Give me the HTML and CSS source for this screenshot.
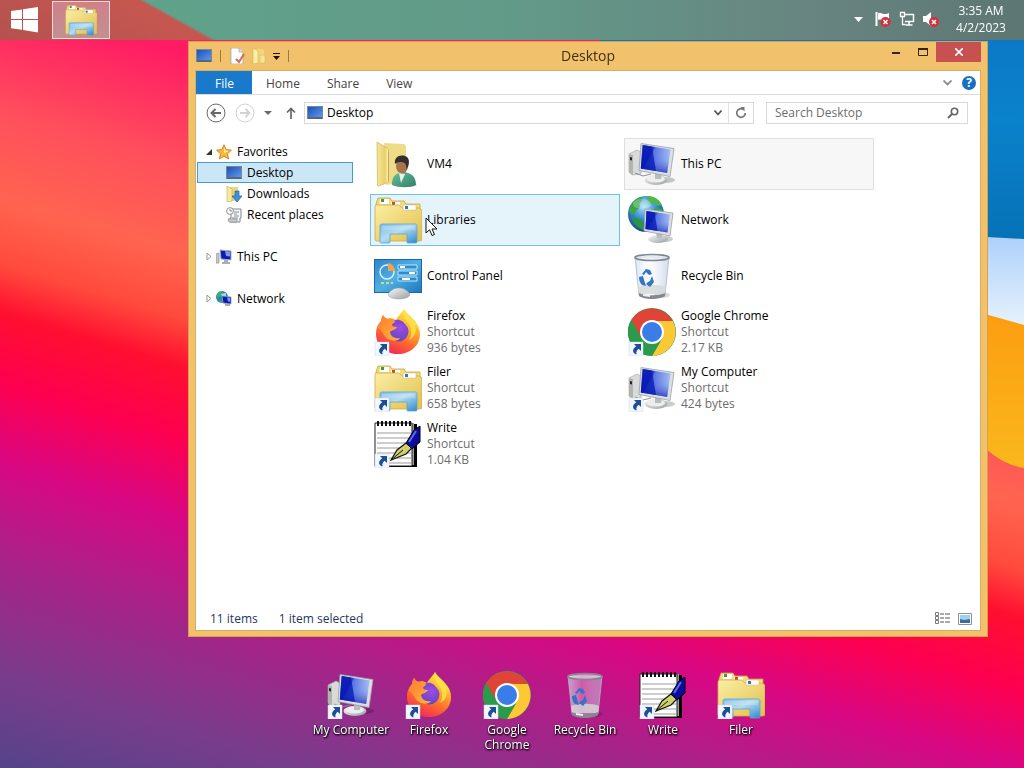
FILE: index.html
```html
<!DOCTYPE html>
<html lang="en">
<head>
  <meta charset="UTF-8">
  <meta name="viewport" content="width=device-width, initial-scale=1">
  <title>Desktop</title>
  <link rel="stylesheet" href="styles.css">
</head>
<body>

  <!-- icon set -->
  <svg class="sprite" aria-hidden="true">
    <defs>
      <linearGradient id="gFolder" x1="0" y1="0" x2="1" y2="1">
        <stop offset="0" stop-color="#fbeea4"/><stop offset="1" stop-color="#e0c04c"/>
      </linearGradient>
      <linearGradient id="gFlap" x1="0" y1="0" x2="1" y2="0">
        <stop offset="0" stop-color="#f5e79a"/><stop offset="0.7" stop-color="#e9cf68"/><stop offset="1" stop-color="#fff6c0"/>
      </linearGradient>
      <linearGradient id="gStand" x1="0" y1="0" x2="1" y2="1">
        <stop offset="0" stop-color="#7cbce4"/><stop offset="0.45" stop-color="#b4dcf2"/><stop offset="1" stop-color="#3088c8"/>
      </linearGradient>
      <linearGradient id="gScreen" x1="0" y1="0" x2="1" y2="0.5">
        <stop offset="0" stop-color="#0a1fb4"/><stop offset="0.38" stop-color="#0a1ac0"/>
        <stop offset="0.45" stop-color="#4a6ae0"/><stop offset="1" stop-color="#b9d0f8"/>
      </linearGradient>
      <linearGradient id="gShade" x1="0" y1="0" x2="0" y2="1">
        <stop offset="0" stop-color="#fff" stop-opacity="0.15"/><stop offset="0.5" stop-color="#4060e0" stop-opacity="0.2"/><stop offset="1" stop-color="#0008a8" stop-opacity="0.7"/>
      </linearGradient>
      <linearGradient id="gMetal" x1="0" y1="0" x2="1" y2="1">
        <stop offset="0" stop-color="#fafafa"/><stop offset="1" stop-color="#9a9d9e"/>
      </linearGradient>
      <radialGradient id="gGlobe" cx="0.45" cy="0.3" r="0.75">
        <stop offset="0" stop-color="#a4e4fa"/><stop offset="0.5" stop-color="#2f86c8"/><stop offset="1" stop-color="#103f86"/>
      </radialGradient>
      <linearGradient id="gPanel" x1="0" y1="0" x2="1" y2="1">
        <stop offset="0" stop-color="#2f86cc"/><stop offset="0.5" stop-color="#50b0e4"/><stop offset="1" stop-color="#2078be"/>
      </linearGradient>
      <linearGradient id="gFire" x1="0.8" y1="0" x2="0.3" y2="1">
        <stop offset="0" stop-color="#fff44f"/><stop offset="0.35" stop-color="#ffb32c"/>
        <stop offset="0.65" stop-color="#ff6a2c"/><stop offset="1" stop-color="#f0245c"/>
      </linearGradient>
      <linearGradient id="gHead" x1="0" y1="0" x2="1" y2="1">
        <stop offset="0" stop-color="#ff7a30"/><stop offset="1" stop-color="#ffb73a"/>
      </linearGradient>
      <radialGradient id="gPurple" cx="0.6" cy="0.3" r="0.8">
        <stop offset="0" stop-color="#a04ae8"/><stop offset="1" stop-color="#5a48b8"/>
      </radialGradient>
      <linearGradient id="gGlass" x1="0" y1="0" x2="1" y2="0">
        <stop offset="0" stop-color="#c8d8ea" stop-opacity="0.7"/><stop offset="0.4" stop-color="#f2f8ff" stop-opacity="0.3"/>
        <stop offset="1" stop-color="#b4c4da" stop-opacity="0.6"/>
      </linearGradient>
      <linearGradient id="gBlueTile" x1="0" y1="0" x2="1" y2="1">
        <stop offset="0" stop-color="#1c50b4"/><stop offset="1" stop-color="#5c98ee"/>
      </linearGradient>
      <linearGradient id="gShirt" x1="0" y1="0" x2="1" y2="1">
        <stop offset="0" stop-color="#6cc09a"/><stop offset="1" stop-color="#2f7f6a"/>
      </linearGradient>
    </defs>

    <symbol id="i-shortcut" viewBox="0 0 48 48">
      <path d="M1 34h14v14H1z" fill="#f2f7fd" stroke="#c9d6e4" stroke-width="0.5"/>
      <path d="M6 36h7v7l-2.300-2.300C8.500 42.500 8 44 8.500 46.500 4.500 45 3.500 41.500 8.200 38.200z" fill="#1c4f94"/>
    </symbol>

    <symbol id="i-user" viewBox="0 0 48 48">
      <path d="M10 3l20 1 2 2v36l-20 3z" fill="#efdc88"/>
      <path d="M3 2l10 6c1 .6 1.500 1.500 1.500 3v31L5 46c-1 .3-1.500-.2-1.500-1z" fill="url(#gFlap)" stroke="#cdb255" stroke-width="0.7"/>
      <path d="M14.500 12v29" stroke="#c8a440" stroke-width="0.8"/>
      <ellipse cx="32" cy="45" rx="11" ry="2" fill="#000" opacity="0.15"/>
      <path d="M18 45c0-7 2-11 8-12l4-1c7 1 12 4 12 13-6 3-17 3-24 0z" fill="url(#gShirt)"/>
      <path d="M25 33l2 10 4-9z" fill="#e6f2ea"/>
      <ellipse cx="28" cy="26" rx="6" ry="7.500" fill="#a9734e"/>
      <path d="M21 24c-1-6 3-9 8-8.500 5 .5 7 4 5.500 10l-2 4c0-5-1-7-5-7.500-3-.3-5 .5-6.500 2z" fill="#33302c"/>
    </symbol>

    <symbol id="i-folders" viewBox="0 0 48 48">
      <path d="M2 8l2-6h12l2 3h12l2 3h14v10H2z" fill="#f2dc7c" stroke="#c7a23c" stroke-width="0.8"/>
      <path d="M6 3h9v5H6zM17 6h9v5h-9z" fill="#fff"/>
      <path d="M7 3h3v3H7z" fill="#3a9a4a"/>
      <path d="M18 6h3v3h-3z" fill="#c84a2c"/>
      <path d="M1 11c0-1 .5-2 2-2h22l3 3h17l3 2v30l-2 1H2l-1-1z" fill="url(#gFolder)" stroke="#cfac46" stroke-width="0.8"/>
      <path d="M29 9h13v5H29z" fill="#fff" stroke="#c9b672" stroke-width="0.5"/>
      <path d="M31 10h3v3h-3z" fill="#3076c4"/>
      <path d="M6 30c0-1.500 1-2 2-2h33c1.500 0 2 1 2 2v16c0 1-1 1-2 1h-7c-1 0-1-.5-1-1v-8H16v8c0 1-1 1-2 1H8c-1 0-2 0-2-1z" fill="url(#gStand)" stroke="#5ca4d6" stroke-width="0.8"/>
      <path d="M8 30h33v4H8z" fill="#fff" opacity="0.2"/>
    </symbol>

    <symbol id="i-control" viewBox="0 0 48 48">
      <path d="M0 7h48v34H0z" fill="#1d69a8"/>
      <path d="M1 8h46v32H1z" fill="url(#gPanel)"/>
      <circle cx="13" cy="20" r="7" fill="none" stroke="#d8f0fc" stroke-width="1.500"/>
      <path d="M14 19v-8a8 8 0 0 1 7 8z" fill="#f5a04a"/>
      <path d="M7 31h3M12 31h3M17 31h2" stroke="#c8e26a" stroke-width="2"/>
      <path d="M24 13h19v4H24zM24 19h19v4H24zM24 25h19v4H24z" fill="#2f8bcc" stroke="#b9e4fa" stroke-width="1"/>
      <path d="M26 15h5M35 21h6M28 27h8" stroke="#fff" stroke-width="2"/>
      <path d="M14 42c2-3 6-6 11-6s9 3 11 6c0 3-5 5-11 5s-11-2-11-5z" fill="url(#gMetal)" stroke="#a0a4a8" stroke-width="0.5"/>
    </symbol>

    <symbol id="i-computer" viewBox="0 0 48 48">
      <ellipse cx="38" cy="40" rx="9" ry="3" fill="#000" opacity="0.2"/>
      <path d="M1 14l8-4 4 2v22l-9 1-3-3z" fill="#d9dbd8" stroke="#a2a5a2" stroke-width="0.6"/>
      <path d="M1 14l4 1v20l-4-3z" fill="#b0b3b0"/>
      <path d="M2 17l2 .5v3L2 20z" fill="#222"/>
      <path d="M7 33l8 3 8-2" fill="none" stroke="#8b8f92" stroke-width="1"/>
      <ellipse cx="28" cy="40" rx="11.500" ry="5" fill="url(#gMetal)"/>
      <ellipse cx="28" cy="39" rx="9" ry="3.500" fill="#eceeee"/>
      <path d="M27 32h7l-1 7h-6z" fill="#b8bcbe"/>
      <path d="M13 3.500l33 5-4 28-31-6z" fill="#dcdfe2" stroke="#9aa0a6" stroke-width="0.8"/>
      <path d="M14.500 5l28 4.500-3.300 23.500L12.800 28.500z" fill="url(#gScreen)"/>
      <path d="M14.500 5l28 4.500-3.300 23.500L12.800 28.500z" fill="url(#gShade)"/>
      <path d="M15 5l9 1.500 4 24.500-15-2.500z" fill="#0518b0" opacity="0.75"/>
    </symbol>

    <symbol id="i-network" viewBox="0 0 48 48">
      <circle cx="18" cy="18" r="18" fill="url(#gGlobe)"/>
      <path d="M1 14C3 6 8 2 14 1c1 3-1 5-3 7 2 2 0 5-2 6s-1 4-4 4-3-2-4-4z" fill="#3ca648"/>
      <path d="M19 0c7 0 12 3 15 9l-5 1-3-3-4 1-2-3z" fill="#4cb84a"/>
      <path d="M4 22c4-1 8 1 11 4l1 8c-5-1-11-6-12-12z" fill="#2e9440"/>
      <path d="M26 12l8 1 1 5-8-1z" fill="#3ca648"/>
      <ellipse cx="14" cy="8" rx="9" ry="5" fill="#fff" opacity="0.25"/>
      <ellipse cx="38" cy="43" rx="7" ry="3" fill="#000" opacity="0.2"/>
      <ellipse cx="30" cy="43" rx="10" ry="4" fill="url(#gMetal)"/>
      <path d="M28 36h7l-1 6h-5z" fill="#b8bcbe"/>
      <path d="M17 13l28 4-3 23-26-5z" fill="#dcdfe2" stroke="#9aa0a6" stroke-width="0.8"/>
      <path d="M18.500 15l23.500 3.500-2.500 18L17.500 33z" fill="url(#gScreen)"/>
      <path d="M18.500 15l23.500 3.500-2.500 18L17.500 33z" fill="url(#gShade)"/>
      <path d="M18.500 15l8 1.300 3 18.700-12-2z" fill="#0518b0" opacity="0.75"/>
    </symbol>

    <symbol id="i-bin" viewBox="0 0 48 48">
      <ellipse cx="34" cy="43" rx="8" ry="3" fill="#000" opacity="0.15"/>
      <path d="M7 5l4 38c4 4 22 4 26 0l4-38z" fill="url(#gGlass)" stroke="#a9b6c6" stroke-width="0.8"/>
      <path d="M10 35c6-3 22-3 28 0l-1 7H11z" fill="#d5d8d8" opacity="0.8"/>
      <path d="M11 41c5 3 21 3 26 0l0 3c-5 4-21 4-26 0z" fill="#84898e"/>
      <path d="M15 43l7 1" stroke="#eee" stroke-width="2"/>
      <ellipse cx="24" cy="5.500" rx="17" ry="3" fill="#eef4fa" fill-opacity="0.5" stroke="#7f8790" stroke-width="1.700"/>
      <path d="M14 22l4-5 4 1 2 4-3 1-3-3-2 3zM11 25l4-1 1 4 2 6-4-1c-2-2-3-5-3-8zM24 24l2 6-4 5-4-3 2-2 2-1z" fill="#3374c6"/>
    </symbol>

    <symbol id="i-firefox" viewBox="0 0 48 48">
      <path d="M30 1c2 4 7 7 10 11 4 4 6 9 6 14 0 12-10 20-22 20S2 38 2 26c0-6 2-10 5-13 0-2 1-4 2-6 1 2 2 3 4 4 3-1 6-1 9 1 2-4 5-6 8-11z" fill="url(#gFire)"/>
      <path d="M30 1c-1 7 1 10 4 14 4 5 4 12 1 17 6-3 8-9 6-15 1 1 3 3 4 5-1-9-13-13-15-21z" fill="#ffe54a" opacity="0.8"/>
      <circle cx="24.500" cy="23.500" r="10" fill="url(#gPurple)"/>
      <path d="M4 20c1-4 2-6 3-7 0-2 1-4 2-6 1 2 3 3 5 4 2-1 5 0 8 2-2 0-4 2-4 4 0 1 2 2 5 2-1 3-5 3-7 5 1 5 5 7 10 6-2 4-12 4-16-3-2-4-3-5-6-7z" fill="url(#gHead)"/>
      <path d="M20 13c4-3 10 0 11 4-3-1-5-2-7-1-2-1-3-2-4-3z" fill="#8544dc"/>
    </symbol>

    <symbol id="i-chrome" viewBox="0 0 48 48">
      <circle cx="24" cy="24" r="24" fill="#34a053"/>
      <path d="M3.200 12L13 30l11-17h20.800A24 24 0 0 0 3.200 12z" fill="#e04436"/>
      <path d="M24 13h20.800A24 24 0 0 1 24 48l10.400-18z" fill="#fcc934"/>
      <path d="M3.200 12L13.600 30A12 12 0 0 0 34.400 30L24 48A24 24 0 0 1 3.200 12z" fill="#2b9b4b"/>
      <circle cx="24" cy="24" r="12" fill="#fff"/>
      <circle cx="24" cy="24" r="10" fill="#3b7de8"/>
    </symbol>

    <symbol id="i-write" viewBox="0 0 48 48">
      <path d="M4 4h39v43H4z" fill="#000"/>
      <path d="M3 3h37v42H3z" fill="#9a9a9a"/>
      <path d="M1 3h37v43H1z" fill="#fff" stroke="#222" stroke-width="1"/>
      <path d="M3 13h34M3 18h34M3 23h34M3 28h34M3 33h34M3 38h34M3 43h34" stroke="#bdbdbd" stroke-width="1.500"/>
      <path d="M4 1v5M8 1v5M12 1v5M16 1v5M20 1v5M24 1v5M28 1v5M32 1v5M36 1v5" stroke="#111" stroke-width="2"/>
      <path d="M17 40l6-10 9-7 6 5-6 6z" fill="#cfcf6c" stroke="#111" stroke-width="1.200"/>
      <path d="M17 40l12-10" stroke="#111" stroke-width="1"/>
      <path d="M32 23l8-13 6-4v16l-8 7z" fill="#0c0c9c" stroke="#000" stroke-width="1"/>
      <path d="M35 22l7-11" stroke="#5c6cf0" stroke-width="2"/>
    </symbol>

    <symbol id="i-screen" viewBox="0 0 16 14">
      <path d="M0 0h16v13H0z" fill="#7c8794"/>
      <path d="M1 1h14v10H1z" fill="url(#gBlueTile)"/>
      <path d="M1 12h14" stroke="#3a4656" stroke-width="1"/>
    </symbol>

    <symbol id="i-star" viewBox="0 0 16 16">
      <path d="M8 .8l2.200 4.800 5.200.6-3.900 3.500 1.100 5.200L8 12.300l-4.600 2.600 1.100-5.200L.6 6.200l5.200-.6z" fill="#fcb83c" stroke="#d98220" stroke-width="1"/>
      <path d="M8 3l1.400 3.400L13 7 8 9z" fill="#fff0a8"/>
    </symbol>

    <symbol id="i-down" viewBox="0 0 16 16">
      <path d="M2 1h10v14H2z" fill="#ecd57c"/>
      <path d="M1 0l5 3v12l-5 1z" fill="#f9e9a0" stroke="#c9a94a" stroke-width="0.6"/>
      <path d="M9 5h4v5h3l-5 6-5-6h3z" fill="#3c93dc" stroke="#1d62a8" stroke-width="0.7"/>
    </symbol>

    <symbol id="i-recent" viewBox="0 0 16 16">
      <path d="M5 2h10v9h-1v4H4v-4h1z" fill="#f4f5f6" stroke="#84898e" stroke-width="1"/>
      <path d="M8 5h5M8 7h3M8 9h5M6 11h6" stroke="#8d949b" stroke-width="1"/>
      <path d="M2 12h9v3H3z" fill="#c8ccd0" stroke="#84898e" stroke-width="0.7"/>
      <circle cx="4" cy="4" r="3.400" fill="#fff" stroke="#8a9096" stroke-width="1"/>
      <path d="M4 2v2h2" fill="none" stroke="#666" stroke-width="0.8"/>
    </symbol>

    <!-- simplified drawings for the 16px tree icons -->
    <symbol id="i-computer-sm" viewBox="0 0 16 16">
      <path d="M0 5l3-1v10H0z" fill="#c4c8c6" stroke="#8d928f" stroke-width="0.7"/>
      <path d="M4 1l11 1v9L5 10z" fill="#0a1cb4" stroke="#a8aeb8" stroke-width="1"/>
      <path d="M9 2l5 .5v5L10 7z" fill="#7f96ea"/>
      <path d="M8 11h4v2H8zM6 13h8v2H6z" fill="#a9aeb4"/>
    </symbol>

    <symbol id="i-network-sm" viewBox="0 0 16 16">
      <circle cx="6" cy="6" r="6" fill="#2a86b8"/>
      <path d="M1 3c2-3 5-3 6-2L5 5 1 7zM3 9l4 1v2c-2 0-4-1-4-3z" fill="#3fae6a"/>
      <path d="M5 3l5-1v3H6z" fill="#a4e0ee"/>
      <path d="M6 5l9 1v7l-8-1z" fill="#0a1cb4" stroke="#98a0ac" stroke-width="0.8"/>
      <path d="M11 6.500l3 .3v4l-2-.3z" fill="#7f96ea"/>
      <path d="M9 13h5v2H9z" fill="#a9aeb4"/>
    </symbol>

    <symbol id="i-doccheck" viewBox="0 0 16 16">
      <path d="M2 0h8l4 4v12H2z" fill="#fff" stroke="#9aa0a6" stroke-width="0.7"/>
      <path d="M10 0v4h4" fill="#e6e6e6" stroke="#9aa0a6" stroke-width="0.7"/>
      <path d="M7 11l3 3 5-8" fill="none" stroke="#d9694a" stroke-width="2"/>
    </symbol>

    <symbol id="i-newfolder" viewBox="0 0 16 16">
      <path d="M3 1h9l1 2v12H3z" fill="#efd87c"/>
      <path d="M2 0l5 3v12l-5 1z" fill="#fff0a8" stroke="#cdb050" stroke-width="0.6"/>
      <path d="M9 7h5v8H9z" fill="#f7e493" stroke="#cdb050" stroke-width="0.5"/>
    </symbol>
  </svg>

  <svg class="wallpaper" viewBox="0 0 1024 768" preserveAspectRatio="none" aria-hidden="true">
    <defs>
      <linearGradient id="wBase" gradientUnits="userSpaceOnUse" x1="0" y1="0" x2="-220" y2="734">
        <stop offset="0" stop-color="#ff1c64"/>
        <stop offset="0.14" stop-color="#ff4f5c"/>
        <stop offset="0.25" stop-color="#ff6450"/>
        <stop offset="0.33" stop-color="#ff4a3c"/>
        <stop offset="0.39" stop-color="#ff0f30"/>
        <stop offset="0.48" stop-color="#fd0050"/>
        <stop offset="0.58" stop-color="#d80884"/>
        <stop offset="0.7" stop-color="#a82288"/>
        <stop offset="0.84" stop-color="#7a3c8c"/>
        <stop offset="1" stop-color="#484688"/>
      </linearGradient>
      <linearGradient id="wBlue" x1="0" y1="0" x2="0" y2="1">
        <stop offset="0" stop-color="#0c74c4"/><stop offset="0.5" stop-color="#0a82cc"/><stop offset="1" stop-color="#0672b6"/>
      </linearGradient>
      <linearGradient id="wSky" x1="0" y1="0" x2="0" y2="1">
        <stop offset="0.2" stop-color="#a8ccfc"/><stop offset="1" stop-color="#e8f4fc"/>
      </linearGradient>
      <linearGradient id="wSun" x1="0" y1="0" x2="0" y2="1">
        <stop offset="0" stop-color="#fd9c10"/><stop offset="1" stop-color="#f9b81c"/>
      </linearGradient>
    </defs>
    <rect width="1024" height="768" fill="url(#wBase)"/>
    <path d="M600 200h424v130l-70-15z" fill="url(#wSky)"/>
    <path d="M600 0h424v239l-424-24z" fill="url(#wBlue)"/>
    <path d="M960 307l64 18v143c-26-4-44-24-64-44z" fill="url(#wSun)"/>
  </svg>

  <div class="desktop">
    <header class="taskbar">
      <button class="start" aria-label="Start">
        <svg width="28" height="26" viewBox="0 0 28 26"><path d="M0 4l11-1.600V12H0zM12 2.200L27 0v12H12zM0 13h11v9.800L0 21.200zM12 13h15v12.500L12 23z" fill="#fff"/></svg>
      </button>
      <button class="task" aria-label="File Explorer"><svg width="34" height="32" viewBox="0 0 48 48"><use href="#i-folders"/></svg></button>
      <div class="tray">
        <button aria-label="Show hidden icons"><svg width="9" height="5" viewBox="0 0 9 5"><path d="M0 0h9L4.500 5z" fill="#fff"/></svg></button>
        <button aria-label="Action Center">
          <svg width="16" height="16" viewBox="0 0 16 16"><path d="M1.500 1v14" stroke="#fff" stroke-width="2"/><path d="M3 2c3-1 4 1 6 1s3 0 5-1v7c-3 1-4 0-6 0s-3-1-5 0z" fill="#fff"/><circle cx="10.500" cy="11" r="5" fill="#d4303c"/><path d="M8.500 9l4 4M12.500 9l-4 4" stroke="#fff" stroke-width="1.500"/></svg>
        </button>
        <button aria-label="Network">
          <svg width="16" height="16" viewBox="0 0 16 16" fill="none" stroke="#fff"><path d="M6 3.500h8.500v7H6M10 11v2.500M6.500 14h7" stroke-width="1.500"/><path d="M1.500 1.500h4v4h-4zM3.500 6v7.500h3" stroke-width="1.300"/></svg>
        </button>
        <button aria-label="Volume muted">
          <svg width="16" height="16" viewBox="0 0 16 16"><path d="M0 5h3l5-4v14l-5-4H0z" fill="#fff"/><circle cx="11" cy="11" r="5" fill="#d4303c"/><path d="M9 9l4 4M13 9l-4 4" stroke="#fff" stroke-width="1.500"/></svg>
        </button>
        <div class="clock"><span>3:35 AM</span><span>4/2/2023</span></div>
      </div>
    </header>

    <main class="window">
      <div class="titlebar">
        <div class="quick">
          <svg width="16" height="14"><use href="#i-screen"/></svg>
          <i class="sep"></i>
          <button aria-label="Properties"><svg width="16" height="16"><use href="#i-doccheck"/></svg></button>
          <button aria-label="New folder"><svg width="16" height="16"><use href="#i-newfolder"/></svg></button>
          <button aria-label="Customize Quick Access Toolbar"><svg width="7" height="7" viewBox="0 0 7 7"><path d="M0 0h7v1H0zM0 3h7L3.500 7z" fill="#1a1200"/></svg></button>
          <i class="sep"></i>
        </div>
        <h1>Desktop</h1>
        <div class="controls">
          <button aria-label="Minimize"><svg width="8" height="8"><path d="M0 4h8v2H0z" fill="#35240a"/></svg></button>
          <button aria-label="Maximize"><svg width="10" height="8"><path d="M.5 1h9v6.500h-9z" fill="none" stroke="#35240a"/><path d="M0 0h10v2H0z" fill="#35240a"/></svg></button>
          <button class="close" aria-label="Close"><svg width="8" height="8"><path d="M0 0l8 8M8 0L0 8" stroke="#fff" stroke-width="1.600"/></svg></button>
        </div>
      </div>

      <div class="frame">
        <nav class="ribbon">
          <button class="file">File</button>
          <button>Home</button>
          <button>Share</button>
          <button>View</button>
          <div class="ribbon-end">
            <button aria-label="Expand the Ribbon"><svg width="9" height="6"><path d="M.5.5l4 4 4-4" fill="none" stroke="#8a8a8a" stroke-width="1.800"/></svg></button>
            <button class="help" aria-label="Help">?</button>
          </div>
        </nav>

        <div class="navbar">
          <button aria-label="Back"><svg width="20" height="20" viewBox="0 0 20 20" fill="none" stroke="#686868"><circle cx="10" cy="10" r="9"/><path d="M15 10H6M9.500 6L5.500 10l4 4" stroke-width="2"/></svg></button>
          <button aria-label="Forward"><svg width="20" height="20" viewBox="0 0 20 20" fill="none" stroke="#d2d2d2"><circle cx="10" cy="10" r="9"/><path d="M5 10h9M10.500 6l4 4-4 4" stroke-width="2"/></svg></button>
          <button aria-label="Recent locations"><svg width="8" height="4"><path d="M0 0h8L4 4z" fill="#6a6a6a"/></svg></button>
          <button class="up" aria-label="Up"><svg width="10" height="12" fill="none" stroke="#666" stroke-width="1.700"><path d="M5 12V1.500M1 5.500l4-4 4 4"/></svg></button>
          <div class="address">
            <svg width="16" height="14"><use href="#i-screen"/></svg>
            <input type="text" value="Desktop" aria-label="Address">
            <button aria-label="Previous locations"><svg width="8" height="6"><path d="M.5.5L4 4.500l3.500-4" fill="none" stroke="#555" stroke-width="1.700"/></svg></button>
            <button class="refresh" aria-label="Refresh"><svg width="12" height="12" viewBox="0 0 12 12"><path d="M8.500 2.500A4.300 4.300 0 1 0 10.300 6" fill="none" stroke="#757575" stroke-width="1.700"/><path d="M5.500 0h4v4.500z" fill="#757575"/></svg></button>
          </div>
          <label class="search">
            <input type="text" placeholder="Search Desktop" aria-label="Search Desktop">
            <svg width="12" height="12" fill="none" stroke="#666"><circle cx="7.500" cy="4.500" r="3.200" stroke-width="1.600"/><path d="M5 7L1 11" stroke-width="2"/></svg>
          </label>
        </div>

        <div class="content">
          <nav class="tree">
            <a href="#"><svg class="arrow" width="6" height="6"><path d="M6 0v6H0z" fill="#333"/></svg><svg width="16" height="16"><use href="#i-star"/></svg>Favorites</a>
            <a href="#" class="child active"><svg width="16" height="14"><use href="#i-screen"/></svg>Desktop</a>
            <a href="#" class="child"><svg width="16" height="16"><use href="#i-down"/></svg>Downloads</a>
            <a href="#" class="child"><svg width="16" height="16"><use href="#i-recent"/></svg>Recent places</a>
            <a href="#" class="group"><svg class="arrow" width="6" height="9"><path d="M1 1l4 3.500L1 8z" fill="#fff" stroke="#999"/></svg><svg width="16" height="16"><use href="#i-computer-sm"/></svg>This PC</a>
            <a href="#" class="group"><svg class="arrow" width="6" height="9"><path d="M1 1l4 3.500L1 8z" fill="#fff" stroke="#999"/></svg><svg width="16" height="16"><use href="#i-network-sm"/></svg>Network</a>
          </nav>

          <section class="files">
            <a href="#" class="item"><svg class="icon"><use href="#i-user"/></svg><span>VM4</span></a>
            <a href="#" class="item selected"><svg class="icon"><use href="#i-computer"/></svg><span>This PC</span></a>
            <a href="#" class="item hover"><svg class="icon"><use href="#i-folders"/></svg><span>Libraries</span>
              <svg class="cursor" width="13" height="20" viewBox="0 0 13 20"><path d="M1 1v15l3.500-3.300L7 18.500l2.500-1L7 12h5z" fill="#fff" stroke="#111"/></svg>
            </a>
            <a href="#" class="item"><svg class="icon"><use href="#i-network"/></svg><span>Network</span></a>
            <a href="#" class="item"><svg class="icon"><use href="#i-control"/></svg><span>Control Panel</span></a>
            <a href="#" class="item"><svg class="icon"><use href="#i-bin"/></svg><span>Recycle Bin</span></a>
            <a href="#" class="item"><svg class="icon"><use href="#i-firefox"/><use href="#i-shortcut"/></svg><span>Firefox<small>Shortcut</small><small>936 bytes</small></span></a>
            <a href="#" class="item"><svg class="icon"><use href="#i-chrome"/><use href="#i-shortcut"/></svg><span>Google Chrome<small>Shortcut</small><small>2.17 KB</small></span></a>
            <a href="#" class="item"><svg class="icon"><use href="#i-folders"/><use href="#i-shortcut"/></svg><span>Filer<small>Shortcut</small><small>658 bytes</small></span></a>
            <a href="#" class="item"><svg class="icon"><use href="#i-computer"/><use href="#i-shortcut"/></svg><span>My Computer<small>Shortcut</small><small>424 bytes</small></span></a>
            <a href="#" class="item"><svg class="icon"><use href="#i-write"/><use href="#i-shortcut"/></svg><span>Write<small>Shortcut</small><small>1.04 KB</small></span></a>
          </section>
        </div>

        <footer class="status">
          <span>11 items</span>
          <span>1 item selected</span>
          <div class="views">
            <button aria-label="Details view"><svg width="15" height="13"><path d="M.5.500h3v3h-3zM.5 4.500h3v3h-3zM.5 8.500h3v3h-3z" fill="#fff" stroke="#777"/><path d="M5 2h4M10 2h5M5 6h4M10 6h5M5 10h4M10 10h5" stroke="#555"/></svg></button>
            <button aria-label="Large icons view"><svg width="14" height="12"><path d="M.5.500h13v11H.5z" fill="#fff" stroke="#8a9298"/><path d="M2 2h10v8H2z" fill="#9fd0f0"/><path d="M2 6l4 1 6-1v4H2z" fill="#3c6c98"/></svg></button>
          </div>
        </footer>
      </div>
    </main>

    <section class="shortcuts">
      <a href="#"><svg class="icon"><use href="#i-computer"/><use href="#i-shortcut"/></svg>My Computer</a>
      <a href="#"><svg class="icon"><use href="#i-firefox"/><use href="#i-shortcut"/></svg>Firefox</a>
      <a href="#"><svg class="icon"><use href="#i-chrome"/><use href="#i-shortcut"/></svg>Google Chrome</a>
      <a href="#"><svg class="icon"><use href="#i-bin"/></svg>Recycle Bin</a>
      <a href="#"><svg class="icon"><use href="#i-write"/><use href="#i-shortcut"/></svg>Write</a>
      <a href="#"><svg class="icon"><use href="#i-folders"/><use href="#i-shortcut"/></svg>Filer</a>
    </section>
  </div>

</body>
</html>
```
FILE: styles.css
```css
* {
  box-sizing: border-box;
}

body {
  margin: 0;
  font-family: "Open Sans", "Noto Sans", sans-serif;
  font-size: 12px;
  line-height: 16px;
  color: #000;
}

button {
  display: flex;
  align-items: center;
  justify-content: center;
  padding: 0;
  border: none;
  background: none;
  font: inherit;
  color: inherit;
}

input {
  min-width: 0;
  padding: 0;
  border: none;
  outline: none;
  background: none;
  font: inherit;
  color: inherit;
}

a {
  color: inherit;
  text-decoration: none;
}

svg {
  flex: none;
}

.sprite {
  position: absolute;
  width: 0;
  height: 0;
}

.wallpaper {
  position: fixed;
  inset: 0;
  z-index: -1;
  width: 100%;
  height: 100%;
}

.icon {
  width: 48px;
  height: 48px;
}

.desktop {
  display: flex;
  flex-direction: column;
  min-height: 100vh;
}

/* taskbar */
.taskbar {
  display: flex;
  height: 40px;
  background: linear-gradient(29deg, #b4524f 0, #c65750 102px, transparent 105px),
    linear-gradient(90deg, #5fa58c, #629a88 50%, #688480 80%, #5c7674);
}

.start {
  width: 50px;
}

.task {
  width: 58px;
  margin: 1px 0 1px 2px;
  border: 1px solid #f3dada;
  background: linear-gradient(#d0808a, #c29090);
}

.tray {
  display: flex;
  align-items: center;
  gap: 8px;
  margin-left: auto;
  padding: 0 15px 2px 0;
}

.tray button:first-child {
  margin-right: 4px;
}

.clock {
  display: flex;
  flex-direction: column;
  width: 56px;
  margin-left: 6px;
  text-align: center;
  line-height: 17px;
  color: #fff;
}

/* explorer window */
.window {
  display: flex;
  flex: 1;
  flex-direction: column;
  margin: 1px 36px 0 188px;
  padding: 0 6px 5px;
  border: 1px solid #d6a24c;
  background: #f2c16c;
}

.titlebar {
  display: grid;
  grid-template-columns: 1fr auto 1fr;
  height: 28px;
}

.titlebar h1 {
  margin: 0;
  font-size: 14px;
  font-weight: normal;
  line-height: 28px;
  color: #3f2f14;
}

.quick {
  display: flex;
  align-items: center;
  gap: 6px;
  padding-left: 1px;
}

.sep {
  width: 1px;
  height: 12px;
  margin: 0 2px;
  background: #a07a38;
}

.controls {
  display: flex;
  justify-content: flex-end;
  height: 20px;
}

.controls button {
  width: 27px;
}

.controls .close {
  width: 45px;
  background: #c75050;
}

.frame {
  display: flex;
  flex: 1;
  flex-direction: column;
  border: 1px solid #d9ac5e;
  background: #fff;
}

.ribbon {
  display: flex;
  height: 24px;
  border-bottom: 1px solid #dadbdc;
  color: #444;
}

.ribbon button {
  padding: 2px 13px 0 14px;
}

.ribbon .file {
  width: 56px;
  background: #1979ca;
  color: #fff;
}

.ribbon-end {
  display: flex;
  align-items: center;
  gap: 10px;
  margin-left: auto;
  padding-right: 4px;
}

.ribbon-end button {
  padding: 0;
}

.ribbon-end .help {
  width: 14px;
  height: 14px;
  border-radius: 50%;
  background: #1a6fc4;
  font-weight: bold;
  color: #fff;
}

.navbar {
  display: flex;
  align-items: center;
  padding: 7px 12px 6px 10px;
}

.navbar > button {
  margin-right: 9px;
}

.navbar > .up {
  margin: 0 8px 0 5px;
}

.address,
.search {
  display: flex;
  align-items: center;
  height: 22px;
  border: 1px solid #d9d9d9;
}

.address {
  flex: 1;
  padding-left: 2px;
}

.address input {
  flex: 1;
  margin-left: 4px;
}

.address button {
  width: 20px;
}

.address .refresh {
  width: 25px;
  height: 20px;
  border-left: 1px solid #e2e2e2;
}

.search {
  width: 202px;
  margin-left: 12px;
  padding: 0 8px;
}

.search input {
  flex: 1;
}

.search input::placeholder {
  color: #6d6d6d;
  opacity: 1;
}

.content {
  display: flex;
  flex: 1;
  gap: 17px;
  padding: 8px 0 0 1px;
}

.tree {
  width: 156px;
  padding-top: 3px;
}

.tree a {
  display: flex;
  align-items: center;
  gap: 5px;
  height: 21px;
  padding-left: 9px;
}

.tree .arrow {
  margin-right: -1px;
}

.tree .child {
  padding-left: 29px;
}

.tree .active {
  padding-left: 28px;
  border: 1px solid #4a9cc8;
  background: #cbe6f6;
}

.tree .group {
  margin-top: 21px;
}

.files {
  display: grid;
  flex: 1;
  grid-template-columns: repeat(auto-fill, 250px);
  grid-auto-rows: 52px;
  align-content: start;
  gap: 4px;
}

.item {
  position: relative;
  display: flex;
  align-items: center;
  gap: 5px;
  padding-left: 3px;
  border: 1px solid transparent;
}

.item small {
  display: block;
  font-size: 12px;
  color: #6d6d6d;
}

.selected {
  border-color: #dedede;
  background: #f7f7f7;
}

.hover {
  border-color: #70c0e7;
  background: #e5f3fb;
}

/* pointer lies over the item */
.cursor {
  position: absolute;
  top: 22px;
  left: 54px;
}

.status {
  display: flex;
  align-items: center;
  gap: 21px;
  height: 23px;
  padding: 0 8px 0 14px;
  color: #1e395b;
}

.views {
  display: flex;
  gap: 8px;
  margin-left: auto;
}

/* icons on the desktop */
.shortcuts {
  display: flex;
  height: 131px;
  padding: 34px 0 0 312px;
}

.shortcuts a {
  display: flex;
  flex-direction: column;
  align-items: center;
  gap: 3px;
  width: 78px;
  text-align: center;
  line-height: 15px;
  color: #fff;
  text-shadow: 0 1px 2px #000, 1px 1px 2px #000;
}
```
